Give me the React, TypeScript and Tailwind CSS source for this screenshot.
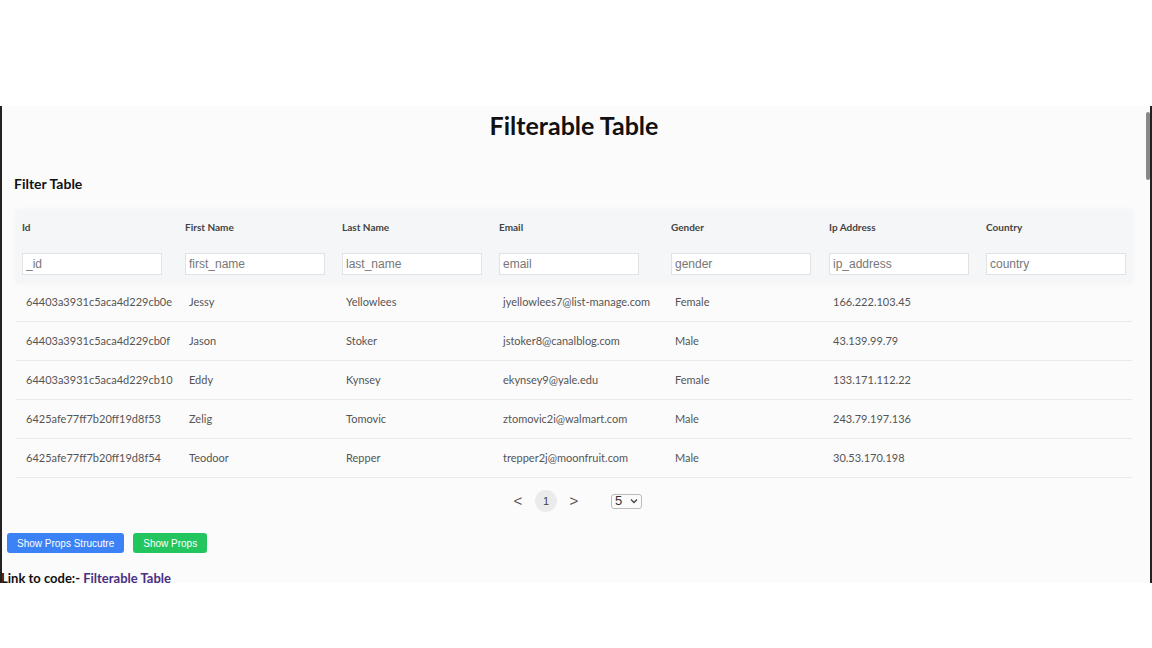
import React, { useState } from 'react';

interface Row {
  _id: string;
  first_name: string;
  last_name: string;
  email: string;
  gender: string;
  ip_address: string;
  country: string;
}

const columns: { key: keyof Row; label: string; width: string }[] = [
  { key: '_id', label: 'Id', width: 'w-[163px]' },
  { key: 'first_name', label: 'First Name', width: 'w-[157px]' },
  { key: 'last_name', label: 'Last Name', width: 'w-[157px]' },
  { key: 'email', label: 'Email', width: 'w-[172px]' },
  { key: 'gender', label: 'Gender', width: 'w-[158px]' },
  { key: 'ip_address', label: 'Ip Address', width: 'w-[157px]' },
  { key: 'country', label: 'Country', width: 'w-[150px]' },
];

const rows: Row[] = [
  { _id: '64403a3931c5aca4d229cb0e', first_name: 'Jessy', last_name: 'Yellowlees', email: 'jyellowlees7@list-manage.com', gender: 'Female', ip_address: '166.222.103.45', country: '' },
  { _id: '64403a3931c5aca4d229cb0f', first_name: 'Jason', last_name: 'Stoker', email: 'jstoker8@canalblog.com', gender: 'Male', ip_address: '43.139.99.79', country: '' },
  { _id: '64403a3931c5aca4d229cb10', first_name: 'Eddy', last_name: 'Kynsey', email: 'ekynsey9@yale.edu', gender: 'Female', ip_address: '133.171.112.22', country: '' },
  { _id: '6425afe77ff7b20ff19d8f53', first_name: 'Zelig', last_name: 'Tomovic', email: 'ztomovic2i@walmart.com', gender: 'Male', ip_address: '243.79.197.136', country: '' },
  { _id: '6425afe77ff7b20ff19d8f54', first_name: 'Teodoor', last_name: 'Repper', email: 'trepper2j@moonfruit.com', gender: 'Male', ip_address: '30.53.170.198', country: '' },
];

const FilterTable: React.FC = () => {
  const [filters, setFilters] = useState<Record<string, string>>({});

  // simple "contains" filter per column
  const visible = rows.filter((r) =>
    columns.every((c) => (r[c.key] || '').toLowerCase().includes((filters[c.key] || '').toLowerCase()))
  );

  return (
    <div className="ml-[14px] mr-[14px]">
      <div className="bg-[#f5f6f8] shadow-[0_0_6px_rgba(0,0,0,0.04)] pt-[11px] pb-[8px] pl-[6px]">
        <div className="flex">
          {columns.map((c) => (
            <div key={c.key} className={`${c.width} shrink-0 text-[10px] font-bold text-[#444] h-[12px] leading-[12px]`}>
              {c.label}
            </div>
          ))}
        </div>
        <div className="flex mt-[17px]">
          {columns.map((c) => (
            <div key={c.key} className={`${c.width} shrink-0`}>
              <input
                value={filters[c.key] || ''}
                onChange={(e) => setFilters({ ...filters, [c.key]: e.target.value })}
                placeholder={c.key}
                className="w-[140px] h-[22px] border border-[#e2e2e2] bg-white px-[3px] text-[12px] font-['Liberation_Sans',sans-serif] text-[#444] placeholder:text-[#777] outline-none"
              />
            </div>
          ))}
        </div>
      </div>
      <div>
        {visible.map((r) => (
          <div key={r._id} className="flex h-[39px] items-center border-b border-[#e9eaec] pl-[10px] text-[11px] text-[#555]">
            {columns.map((c) => (
              <div key={c.key} className={`${c.width} shrink-0`}>
                {r[c.key]}
              </div>
            ))}
          </div>
        ))}
      </div>
    </div>
  );
};

export default function App() {
  return (
    <div className="w-[1152px] h-[648px] bg-white flex flex-col overflow-hidden font-['Lato',sans-serif]">
      <div className="h-[106px] shrink-0" />
      <div className="h-[477px] shrink-0 flex border-l-2 border-[#222] bg-[#fbfbfc]">
        <div className="flex-1 min-w-0">
          <h1 className="text-center text-[25px] font-bold text-[#111] pt-[1px] leading-[36px]">Filterable Table</h1>
          <h2 className="text-[14px] font-bold text-[#111] ml-[12px] mt-[33px] leading-[16px]">Filter Table</h2>
          <div className="mt-[18px]">
            <FilterTable />
          </div>
          <div className="flex items-center justify-center gap-[5px] mt-[12px] text-[13px] text-[#444] font-['Liberation_Sans',sans-serif]">
            <button className="w-[24px] h-[22px] text-[15px] text-[#555]">&lt;</button>
            <span className="w-[22px] h-[22px] rounded-full bg-[#ebebeb] flex items-center justify-center text-[11px] text-[#444]">1</span>
            <button className="w-[24px] h-[22px] text-[15px] text-[#555]">&gt;</button>
            <div className="ml-[20px] h-[15px] w-[31px] border border-[#bbb] rounded-[3px] flex items-center justify-between px-[3px] text-[13px] text-[#333]">
              <span>5</span>
              <svg width="8" height="6" viewBox="0 0 8 6"><path d="M1 1.5 L4 4.5 L7 1.5" stroke="#444" strokeWidth="1.3" fill="none" /></svg>
            </div>
          </div>
          <div className="flex gap-[9px] ml-[5px] mt-[21px] font-['Liberation_Sans',sans-serif]">
            <button className="h-[20px] px-[10px] rounded-[3px] bg-[#3b82f6] text-white text-[10px]">Show Props Strucutre</button>
            <button className="h-[20px] px-[10px] rounded-[3px] bg-[#22c55e] text-white text-[10px]">Show Props</button>
          </div>
          <p className="relative z-10 mt-[17px] -ml-[1px] text-[13px] font-bold text-[#111] leading-[16px]">
            Link to code:- <a href="#" className="text-[#4a2f82]">Filterable Table</a>
          </p>
        </div>
        <div className="w-[6px] shrink-0 flex">
          <div className="w-[4px] pt-[6px]">
            <div className="h-[68px] bg-[#888] rounded-sm" />
          </div>
          <div className="w-[2px] bg-[#222]" />
        </div>
      </div>
      <div className="flex-1" />
    </div>
  );
}
